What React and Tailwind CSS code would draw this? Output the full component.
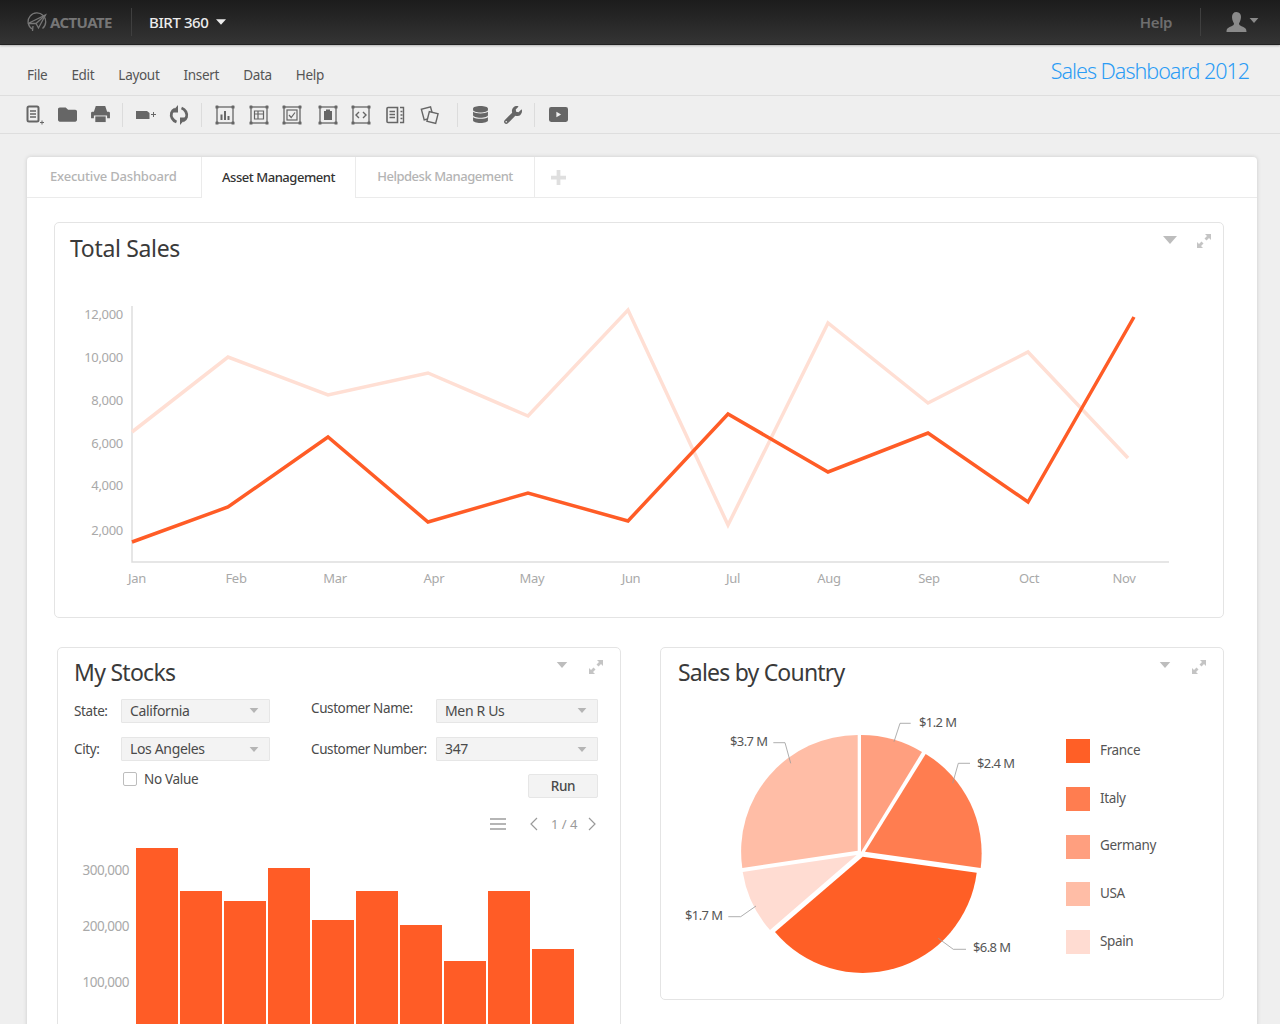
import React from "react";
import { FaFolder, FaDatabase, FaWrench } from "react-icons/fa";

const G = "#666666";

function Caret({ className = "" }) {
  return (
    <svg viewBox="0 0 14 8" className={className}>
      <path d="M0 0h14L7 8z" fill="currentColor" />
    </svg>
  );
}

function Expand() {
  return (
    <svg viewBox="0 0 14 14" className="w-[14px] h-[14px] text-[#c4c4c4]">
      <path d="M8 0H14V6L12 4 9.500 6.500 7.500 4.500 10 2zM6 14H0V8L2 10 4.500 7.500 6.500 9.500 4 12z" fill="currentColor" />
    </svg>
  );
}

function Controls({ gap = "ml-[20px]", caret = "w-[14px] h-[8px]", top = "mt-[1px]" }) {
  return (
    <div className={`ml-auto flex items-start ${top}`}>
      <Caret className={`${caret} mt-[2px] text-[#bdbdbd]`} />
      <div className={gap}>
        <Expand />
      </div>
    </div>
  );
}

function Frame({ children }) {
  return (
    <svg viewBox="0 0 20 20" className="w-[20px] h-[20px]">
      <rect x="2" y="2" width="16" height="16" fill="none" stroke={G} strokeWidth="1.300" />
      {[[0.5, 0.5], [16.5, 0.5], [0.5, 16.5], [16.5, 16.5]].map(([x, y]) => (
        <rect key={x + "-" + y} x={x} y={y} width="3" height="3" rx="0.600" fill={G} />
      ))}
      {children}
    </svg>
  );
}

function Tool({ className = "", children }) {
  return <div className={`w-[33px] h-[24px] flex items-center justify-center shrink-0 ${className}`}>{children}</div>;
}

function Sep({ className = "" }) {
  return <div className={`w-px h-[24px] bg-[#dcdcdc] shrink-0 ${className}`} />;
}

function Select({ value, className = "" }) {
  return (
    <div className={`h-[24px] bg-[#f3f3f3] border border-[#e6e6e6] rounded-[1px] flex items-center pl-[8px] pr-[10px] text-[14px] tracking-[-0.35px] text-[#4a4a4a] ${className}`}>
      <span className="pb-[1px]">{value}</span>
      <Caret className="ml-auto w-[10px] h-[5px] text-[#b5b5b5]" />
    </div>
  );
}

const light = "132,432 228,357 328,395 428,373 528,416 628,310 728,525 828,323 928,403 1028,352 1128,458";
const main = "132,542 228,507 328,437 428,522 528,493 628,521 728,414 828,472 928,433 1028,502 1134,317";
const yLabels = [[314, "12,000"], [357, "10,000"], [400, "8,000"], [443, "6,000"], [485, "4,000"], [530, "2,000"]];
const xLabels = [[137, "Jan"], [236, "Feb"], [335, "Mar"], [434, "Apr"], [532, "May"], [631, "Jun"], [733, "Jul"], [829, "Aug"], [929, "Sep"], [1029, "Oct"], [1124, "Nov"]];
const bars = [848, 891, 901, 868, 920, 891, 925, 961, 891, 949];
const legend = [["#ff5f26", "France"], ["#ff7d50", "Italy"], ["#ff9f7f", "Germany"], ["#ffbda6", "USA"], ["#ffdcd2", "Spain"]];
const pieLabels = [[919, 722, "$1.2 M"], [977, 763, "$2.4 M"], [730, 741, "$3.7 M"], [685, 915, "$1.7 M"], [973, 947, "$6.8 M"]];

export default function App() {
  return (
    <div className="w-[1280px] h-[1024px] overflow-hidden bg-[#efefef] text-[#444] [font-family:'Noto_Sans',sans-serif]">
      {/* top bar */}
      <header className="h-[45px] bg-gradient-to-b from-[#1c1c1c] to-[#343434] flex items-center border-b border-[#222] shadow-[0_1px_2px_rgba(0,0,0,0.25)]">
        <svg viewBox="0 0 20 20" className="w-[20px] h-[20px] ml-[27px]" fill="none" stroke="#777" strokeWidth="1.300">
          <path d="M5 17A8.800 8.800 0 1 1 15.500 16.500" />
          <path d="M1 11.500 18.500 3 11.500 16 9 11.500z" fill="#2a2a2a" />
          <path d="M9 11.500 18.500 3" />
          <path d="M6 14 5.500 19" />
        </svg>
        <span className="ml-[3px] w-[64px] text-[15px] font-bold text-[#767676] tracking-[-0.6px]">ACTUATE</span>
        <div className="ml-[17px] w-px h-[28px] bg-[#3f3f3f]" />
        <span className="ml-[17px] text-[15px] font-medium text-[#ececec] tracking-[-0.4px]">BIRT 360</span>
        <Caret className="ml-[8px] w-[10px] h-[6px] text-[#ececec]" />
        <span className="ml-auto text-[15px] font-semibold text-[#6e6e6e] tracking-[-0.4px]">Help</span>
        <div className="ml-[28px] w-px h-[28px] bg-[#3f3f3f]" />
        <svg viewBox="0 0 20 20" className="ml-[25px] w-[21px] h-[20px] text-[#8a8a8a]">
          <path d="M10 0c3 0 4.500 2.200 4.500 5S13 10.500 12.500 11.500c0 1.500 1 2 3 3 2.500 1 4.500 1.500 4.500 5.500H0c0-4 2-4.500 4.500-5.500 2-1 3-1.500 3-3C7 10.500 5.500 8 5.500 5S7 0 10 0z" fill="currentColor" />
        </svg>
        <Caret className="ml-[2px] mr-[21px] w-[10px] h-[5px] mb-[3px] text-[#8a8a8a]" />
      </header>

      {/* menu */}
      <div className="h-[51px] flex border-b border-[#dedede] pl-[27px] pr-[31px]">
        <nav className="flex gap-[24px] pt-[21px] text-[13.500px] leading-[18px] text-[#555] tracking-[-0.3px]">
          {["File", "Edit", "Layout", "Insert", "Data", "Help"].map((m) => (
            <span key={m}>{m}</span>
          ))}
        </nav>
        <div className="ml-auto pt-[11px] text-[21.500px] leading-[30px] font-light text-[#2b9cf5] tracking-[-1px]">Sales Dashboard 2012</div>
      </div>

      {/* toolbar */}
      <div className="h-[38px] flex items-center border-b border-[#dedede] pl-[18px] text-[#666]">
        <Tool>
          <svg viewBox="0 0 20 20" className="w-[20px] h-[20px]">
            <rect x="2.500" y="1.500" width="11" height="15" rx="1.500" fill="none" stroke={G} strokeWidth="2" />
            <path d="M5 6h6M5 9h6M5 12h6" stroke={G} strokeWidth="1.300" />
            <path d="M15 17.500h4M17 15.500v4" stroke={G} strokeWidth="1" />
          </svg>
        </Tool>
        <Tool><FaFolder size={19} color={G} /></Tool>
        <Tool>
          <svg viewBox="0 0 20 18" className="w-[19px] h-[17px]">
            <path d="M5 0h10l2 6h1.500A1.500 1.500 0 0 1 20 7.500V13h-3v-3H3v3H0V7.500A1.500 1.500 0 0 1 1.500 6H3z" fill={G} />
            <rect x="4.500" y="11" width="11" height="6" fill={G} />
          </svg>
        </Tool>
        <Sep className="ml-[5px]" />
        <Tool className="ml-[6px]">
          <svg viewBox="0 0 20 10" className="w-[20px] h-[10px]">
            <path d="M0 1h11l2.500 2v6H0z" fill={G} />
            <path d="M15 4.500h5M17.500 2v5" stroke={G} strokeWidth="1" />
          </svg>
        </Tool>
        <Tool>
          <svg viewBox="0 0 20 20" className="w-[20px] h-[20px]" fill="none" stroke={G} strokeWidth="2.800">
            <path d="M7.500 17C3.500 15.500 1.500 11.500 2.500 8 3 6.200 4.500 4.700 6 4" />
            <path d="M12.500 3c4 1.500 6 5.500 5 9-.5 1.800-2 3.300-3.500 4" />
            <path d="M9 0v7.500H2.500zM11 20v-7.500h6.500z" fill={G} stroke="none" />
          </svg>
        </Tool>
        <Sep className="ml-[6px]" />
        <Tool className="ml-[6px]">
          <Frame><path d="M6.500 9.500v5.500M10 6v9M13.500 11v4" stroke={G} strokeWidth="2" /></Frame>
        </Tool>
        <Tool className="ml-[1px]">
          <Frame><path d="M5.500 6h9v8h-9zM5.500 9h9M9 6v8" stroke={G} strokeWidth="1.200" fill="none" /></Frame>
        </Tool>
        <Tool>
          <Frame>
            <rect x="5" y="5" width="10" height="10" fill="none" stroke={G} strokeWidth="1.200" />
            <path d="M7 10l2.200 2.500L13 7.500" fill="none" stroke={G} strokeWidth="1.200" />
          </Frame>
        </Tool>
        <Tool className="ml-[3px]">
          <Frame>
            <rect x="6" y="6" width="8" height="9" fill={G} />
            <rect x="8" y="4.500" width="4" height="2.500" fill={G} />
          </Frame>
        </Tool>
        <Tool>
          <Frame><path d="M8 7l-3 3 3 3M12 7l3 3-3 3" fill="none" stroke={G} strokeWidth="1.400" /></Frame>
        </Tool>
        <Tool className="ml-[1px]">
          <svg viewBox="0 0 20 20" className="w-[20px] h-[20px]" fill="none" stroke={G}>
            <path d="M12.500 2.500H3a1 1 0 0 0-1 1v13a1 1 0 0 0 1 1h9.500z" strokeWidth="1.600" />
            <path d="M4.500 6.500h5.500M4.500 9.500h5.500M4.500 12.500h5.500" strokeWidth="1.400" />
            <path d="M15 2.500h3.500v15H15" strokeWidth="1.400" />
            <path d="M15.500 6.500h2M15.500 10h2M15.500 13.500h2" strokeWidth="1.400" />
          </svg>
        </Tool>
        <Tool className="ml-[2px]">
          <svg viewBox="0 0 20 20" className="w-[20px] h-[20px]" fill="none" stroke={G} strokeWidth="1.400">
            <rect x="2.500" y="3" width="9.500" height="11" transform="rotate(-15 7 8)" />
            <rect x="8" y="7.500" width="9" height="10" fill="#efefef" transform="rotate(14 12.500 12.500)" />
          </svg>
        </Tool>
        <Sep className="ml-[11px]" />
        <Tool className="ml-[6px]"><FaDatabase size={17} color={G} /></Tool>
        <Tool className="ml-[-1px]"><FaWrench size={18} color={G} /></Tool>
        <Sep className="ml-[5px]" />
        <Tool className="ml-[7px]">
          <svg viewBox="0 0 18 14" className="w-[19px] h-[15px]">
            <rect width="18" height="14" rx="2" fill={G} />
            <path d="M7 4.500v5L11.500 7z" fill="#f0f0f0" />
          </svg>
        </Tool>
      </div>

      {/* main card */}
      <main className="ml-[27px] mt-[23px] w-[1230px] h-[1000px] bg-white rounded-t-[4px] shadow-[0_0_4px_rgba(0,0,0,0.15)]">
        <div className="h-[41px] flex border-b border-[#ebebeb] text-[13px] font-medium">
          <div className="w-[175px] border-r border-[#ebebeb] pl-[23px] flex items-center text-[#b4b4b4] tracking-[-0.2px]">Executive Dashboard</div>
          <div className="w-[154px] h-[41px] bg-white border-r border-[#ebebeb] flex items-center justify-center text-[#333] tracking-[-0.46px]">Asset Management</div>
          <div className="w-[179px] border-r border-[#ebebeb] flex items-center justify-center text-[#b4b4b4] tracking-[-0.47px]">Helpdesk Management</div>
          <div className="w-[47px] flex items-center justify-center">
            <svg viewBox="0 0 16 16" className="w-[15px] h-[15px] mr-[1px]">
              <path d="M6 0h4v6h6v4h-6v6H6v-6H0V6h6z" fill="#dfdfdf" />
            </svg>
          </div>
        </div>

        {/* total sales */}
        <section className="ml-[27px] mt-[24px] w-[1170px] h-[396px] border border-[#e4e4e4] rounded-[5px] bg-white">
          <div className="flex pt-[10px] pl-[15px] pr-[12px]">
            <h2 className="text-[23px] leading-[30px] text-[#3a3a3a] tracking-[-0.33px]">Total Sales</h2>
            <Controls />
          </div>
          <svg viewBox="56 295 1166 300" width="1166" height="300" className="mt-[32px] ml-[1px]">
            <path d="M132 306V562H1169" fill="none" stroke="#dedede" strokeWidth="1.500" />
            {yLabels.map(([y, t]) => (
              <text key={t} x="123" y={y} textAnchor="end" dominantBaseline="central" fontSize="13" fill="#a9a9a9" letterSpacing="-0.3">{t}</text>
            ))}
            {xLabels.map(([x, t]) => (
              <text key={t} x={x} y="578" textAnchor="middle" dominantBaseline="central" fontSize="13" fill="#a9a9a9" letterSpacing="-0.3">{t}</text>
            ))}
            <polyline points={light} fill="none" stroke="#ffdfd4" strokeWidth="3.500" />
            <polyline points={main} fill="none" stroke="#ff5c26" strokeWidth="3.500" />
          </svg>
        </section>

        <div className="flex mt-[29px]">
          {/* stocks */}
          <section className="ml-[30px] w-[564px] h-[500px] border border-[#e4e4e4] rounded-[5px] bg-white pl-[16px] pr-[22px]">
            <div className="flex pt-[9px] mr-[-5px]">
              <h2 className="text-[23px] leading-[30px] text-[#3a3a3a] tracking-[-0.72px]">My Stocks</h2>
              <Controls caret="w-[12px] h-[6px]" top="mt-[3px]" gap="ml-[21px]" />
            </div>
            <div className="flex items-center mt-[11px] text-[13.500px] tracking-[-0.4px] text-[#4a4a4a]">
              <span className="w-[47px]">State:</span>
              <Select value="California" className="w-[149px]" />
              <span className="ml-[41px] w-[125px] pb-[5px]">Customer Name:</span>
              <Select value="Men R Us" className="w-[162px]" />
            </div>
            <div className="flex items-center mt-[14px] text-[13.500px] tracking-[-0.4px] text-[#4a4a4a]">
              <span className="w-[47px]">City:</span>
              <Select value="Los Angeles" className="w-[149px]" />
              <span className="ml-[41px] w-[125px]">Customer Number:</span>
              <Select value="347" className="w-[162px]" />
            </div>
            <div className="flex items-start mt-[11px] text-[13.500px] tracking-[-0.3px] text-[#4a4a4a]">
              <div className="ml-[49px] w-[14px] h-[14px] border border-[#bdbdbd] rounded-[2px] bg-white" />
              <span className="ml-[7px] leading-[14px]">No Value</span>
              <button className="ml-auto mt-[2px] w-[70px] h-[24px] bg-[#f3f3f3] border border-[#e6e6e6] rounded-[2px] text-[13.500px] font-medium text-[#4a4a4a]">Run</button>
            </div>
            <div className="flex items-center justify-end h-[16px] mt-[18px] pr-[1px]">
              <svg viewBox="0 0 16 12" className="w-[16px] h-[12px]">
                <path d="M0 0h16v2H0zM0 5h16v2H0zM0 10h16v2H0z" fill="#b5b5b5" />
              </svg>
              <svg viewBox="0 0 9 14" className="ml-[23px] w-[9px] h-[14px]">
                <path d="M8 1 2 7l6 6" fill="none" stroke="#9a9a9a" strokeWidth="1.200" />
              </svg>
              <span className="ml-[13px] w-[29px] text-[13px] text-[#9a9a9a] whitespace-nowrap">1 / 4</span>
              <svg viewBox="0 0 9 14" className="ml-[8px] w-[9px] h-[14px]">
                <path d="M1 1l6 6-6 6" fill="none" stroke="#9a9a9a" strokeWidth="1.200" />
              </svg>
            </div>
            <svg viewBox="59 840 560 184" width="560" height="184" className="ml-[-15px] mt-[8px]">
              {[[870, "300,000"], [926, "200,000"], [982, "100,000"]].map(([y, t]) => (
                <text key={t} x="129" y={y} textAnchor="end" dominantBaseline="central" fontSize="13.500" fill="#a9a9a9" letterSpacing="-0.5">{t}</text>
              ))}
              {bars.map((top, i) => (
                <rect key={i} x={136 + i * 44} y={top} width="42" height={1024 - top} fill="#ff5c26" />
              ))}
            </svg>
          </section>

          {/* sales by country */}
          <section className="ml-[39px] w-[564px] h-[353px] border border-[#e4e4e4] rounded-[5px] bg-white">
            <div className="flex pt-[9px] pl-[17px] pr-[17px]">
              <h2 className="text-[23px] leading-[30px] text-[#3a3a3a] tracking-[-0.8px]">Sales by Country</h2>
              <Controls caret="w-[12px] h-[6px]" top="mt-[3px]" gap="ml-[21px]" />
            </div>
            <div className="flex">
              <svg viewBox="661 709 395 280" width="395" height="280" className="mt-[22px]">
                <path d="M861 852V735A117 117 0 0 1 922 752z" fill="#ff9f7f" />
                <path d="M865 851.700 925.700 754A116 116 0 0 1 980.700 868z" fill="#ff7d50" />
                <path d="M862.700 856.700 976.700 872.700A114.700 114.700 0 0 1 775 932z" fill="#ff5f26" />
                <path d="M856.700 855 770 930A115 115 0 0 1 742.700 872z" fill="#ffdcd2" />
                <path d="M857.700 850.700 742.300 868A116.500 116.500 0 0 1 857.700 735z" fill="#ffbda6" />
                <g fill="none" stroke="#9a9a9a" strokeWidth="0.800">
                  <path d="M910.700 723.300H900L894 741.700" />
                  <path d="M970 763.300H958.300L952.700 783.300" />
                  <path d="M773.300 742.700H785L790.700 763.300" />
                  <path d="M728.300 916.700H740.700L756 906" />
                  <path d="M966 949.300H953.300L938.300 938.300" />
                </g>
                {pieLabels.map(([x, y, t]) => (
                  <text key={t} x={x} y={y} dominantBaseline="central" fontSize="13" fill="#555" letterSpacing="-0.6">{t}</text>
                ))}
              </svg>
              <ul className="ml-[10px] mt-[52px] flex flex-col gap-[23.750px] text-[13.500px] tracking-[-0.35px] text-[#555]">
                {legend.map(([c, t]) => (
                  <li key={t} className="flex items-center h-[24px]">
                    <span className="w-[24px] h-[24px]" style={{ backgroundColor: c }} />
                    <span className="ml-[10px] pb-[2px]">{t}</span>
                  </li>
                ))}
              </ul>
            </div>
          </section>
        </div>
      </main>
    </div>
  );
}
